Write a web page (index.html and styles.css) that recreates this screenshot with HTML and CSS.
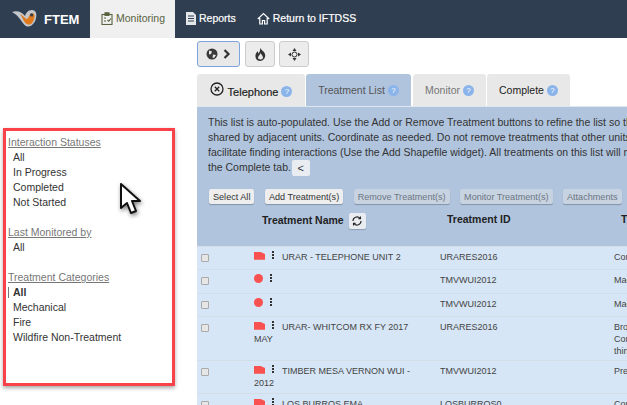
FILE: index.html
```html
<!DOCTYPE html>
<html lang="en">

<head>
    <meta charset="UTF-8">
    <meta name="viewport" content="width=device-width, initial-scale=1.0">
    <title>FTEM Monitoring</title>
    <link rel="stylesheet" href="styles.css">
</head>

<body>
    <header class="topbar">
        <div class="brand">
            <svg class="logo" width="26" height="20" viewBox="0 0 26 20">
                <path d="M0 3 C5 1 10 3 13 7 C14 4 16 1 20 1 C24 1 25 5 24 9 C23 15 18 19 14 17 C10 15 8 7 0 3Z" fill="#c4c8cc"/>
                <path d="M8 5 C11 6 13 10 15 10 C17 9 17 5 20 4 C23 4 23 8 22 10 C21 14 18 17 15 15 C12 14 11 9 8 5Z" fill="#e07a1c"/>
                <path d="M18 5 C20 4 22 5 21 7 C20 8 18 8 18 5Z" fill="#2f3e50"/>
            </svg>
            <span class="brand-name">FTEM</span>
        </div>
        <a class="nav-item nav-active">
            <svg width="12" height="13" viewBox="0 0 12 13" fill="none" stroke="#59633f" stroke-width="1.1">
                <rect x="1" y="2.5" width="10" height="10"/><rect x="4" y="0.8" width="4" height="2.6" fill="#59633f"/>
                <path d="M3 6h2M3 9h2M6.5 8l1.2 1.2L10 6.5"/>
            </svg>
            Monitoring
        </a>
        <a class="nav-item">
            <svg width="10" height="13" viewBox="0 0 10 13">
                <path d="M0 0h7l3 3v10H0z" fill="#e4e7ea"/>
                <path d="M2 4h6M2 6.5h6M2 9h6" stroke="#2f3e50"/>
            </svg>
            Reports
        </a>
        <a class="nav-item nav-return">
            <svg width="13" height="13" viewBox="0 0 13 13" fill="none" stroke="#fff" stroke-width="1.2">
                <path d="M0.8 7L6.5 1.5 12.2 7M2.8 6v6h2.6V8.5h2.2V12h2.6V6"/>
            </svg>
            Return to IFTDSS
        </a>
    </header>

    <div class="layout">
        <aside class="filters">
            <h3 class="filter-title">Interaction Statuses</h3>
            <ul class="filter-list">
                <li>All</li>
                <li>In Progress</li>
                <li>Completed</li>
                <li>Not Started</li>
            </ul>
            <h3 class="filter-title">Last Monitored by</h3>
            <ul class="filter-list">
                <li>All</li>
            </ul>
            <h3 class="filter-title">Treatment Categories</h3>
            <ul class="filter-list">
                <li class="filter-selected">All</li>
                <li>Mechanical</li>
                <li>Fire</li>
                <li>Wildfire Non-Treatment</li>
            </ul>
        </aside>

        <main class="content">
            <div class="toolbar">
                <button class="tool-btn tool-focus">
                    <svg width="12" height="12" viewBox="0 0 12 12">
                        <circle cx="6" cy="6" r="5.5" fill="#3a3a3a"/>
                        <path d="M3 2.5l3 1-1 2.5-2 .5zM7 6.5l3 .5-2 3-1.500-.5z" fill="#e8e8e8"/>
                    </svg>
                    <svg width="8" height="10" viewBox="0 0 8 10" fill="none" stroke="#333" stroke-width="2.200"><path d="M1.500 1l4 4-4 4"/></svg>
                </button>
                <button class="tool-btn">
                    <svg width="11" height="13" viewBox="0 0 11 13">
                        <path d="M5 0c1 2 4 3 5 6 1 4-2 7-5 7S0 10 .5 7c.3-2 1.500-2.500 2-4 .5.800.8 1.500.8 2.500C4.500 4.500 5.500 2 5 0z" fill="#333"/>
                        <path d="M5.500 5c.5 1.500 2.500 2.500 2.500 4.800 0 1-1 1.700-2.500 1.700S3 10.800 3 9.800C3 8.300 5 7 5.500 5z" fill="#e8e8e8"/>
                    </svg>
                </button>
                <button class="tool-btn">
                    <svg width="13" height="13" viewBox="0 0 13 13" fill="#333">
                        <path d="M6.500 0l2 3h-4zM6.500 13l-2-3h4zM0 6.500l3-2v4zM13 6.500l-3 2v-4z"/>
                        <circle cx="6.500" cy="6.500" r="2.500" fill="none" stroke="#333"/>
                    </svg>
                </button>
            </div>

            <nav class="tabs">
                <div class="tab tab-current">
                    <svg class="tab-x" width="14" height="14" viewBox="0 0 14 14" fill="none" stroke="#222" stroke-width="1.300">
                        <circle cx="7" cy="7" r="6"/><path d="M4.800 4.800l4.400 4.400M9.200 4.800l-4.400 4.400"/>
                    </svg>
                    Telephone <span class="help">?</span>
                </div>
                <div class="tab tab-list">Treatment List <span class="help">?</span></div>
                <div class="tab tab-muted">Monitor <span class="help">?</span></div>
                <div class="tab tab-last">Complete <span class="help">?</span></div>
            </nav>

            <section class="panel">
                <p class="intro">This list is auto-populated. Use the Add or Remove Treatment buttons to refine the list so th<br>
                    shared by adjacent units. Coordinate as needed. Do not remove treatments that other units<br>
                    facilitate finding interactions (Use the Add Shapefile widget). All treatments on this list will n<br>
                    the Complete tab. <button class="collapse-btn">&lt;</button></p>
                <div class="actions">
                    <button class="action-btn">Select All</button>
                    <button class="action-btn">Add Treatment(s)</button>
                    <button class="action-btn action-off">Remove Treatment(s)</button>
                    <button class="action-btn action-off">Monitor Treatment(s)</button>
                    <button class="action-btn action-off">Attachments</button>
                </div>
                <table class="treatments">
                    <thead>
                        <tr>
                            <th class="col-check"></th>
                            <th class="col-name">
                                <span class="name-head">Treatment Name
                                    <button class="refresh-btn">
                                        <svg width="10" height="10" viewBox="0 0 10 10" fill="none" stroke="#222" stroke-width="1.100">
                                            <path d="M1 5a4 4 0 0 1 7-2.700M9 5a4 4 0 0 1-7 2.700M8.500.5v2.200H6.300M1.500 9.500V7.300h2.200"/>
                                        </svg>
                                    </button>
                                </span>
                            </th>
                            <th class="col-id">Treatment ID</th>
                            <th class="col-type">Type</th>
                        </tr>
                    </thead>
                    <tbody>
                        <tr class="row-a">
                            <td><span class="check"></span></td>
                            <td class="name-cell"><span class="flag"></span><span class="dots"></span>URAR - TELEPHONE UNIT 2</td>
                            <td>URARES2016</td>
                            <td>Commercial</td>
                        </tr>
                        <tr class="row-a row-tall">
                            <td><span class="check"></span></td>
                            <td class="name-cell"><span class="dot"></span><span class="dots"></span></td>
                            <td>TMVWUI2012</td>
                            <td>Machine</td>
                        </tr>
                        <tr class="row-a">
                            <td><span class="check"></span></td>
                            <td class="name-cell"><span class="dot"></span><span class="dots"></span></td>
                            <td>TMVWUI2012</td>
                            <td>Machine</td>
                        </tr>
                        <tr class="row-b">
                            <td><span class="check"></span></td>
                            <td class="name-cell"><span class="flag"></span><span class="dots"></span>URAR- WHITCOM RX FY 2017 MAY</td>
                            <td>URARES2016</td>
                            <td>Broadcast<br>Commercial<br>thinning</td>
                        </tr>
                        <tr class="row-c">
                            <td><span class="check"></span></td>
                            <td class="name-cell"><span class="flag"></span><span class="dots"></span>TIMBER MESA VERNON WUI - 2012</td>
                            <td>TMVWUI2012</td>
                            <td>Prescribed</td>
                        </tr>
                        <tr class="row-a">
                            <td><span class="check"></span></td>
                            <td class="name-cell"><span class="flag"></span><span class="dots"></span>LOS BURROS EMA</td>
                            <td>LOSBURROS0</td>
                            <td>Commercial</td>
                        </tr>
                    </tbody>
                </table>
            </section>
        </main>
    </div>

    <!-- annotation drawn over the screenshot -->
    <div class="callout"></div>
    <svg class="pointer" width="24" height="34" viewBox="0 0 24 34">
        <path d="M2 2v24l6-5 4 10 5-2-4-10h8z" fill="#fff" stroke="#111" stroke-width="2" stroke-linejoin="round"/>
    </svg>
</body>

</html>
```

FILE: styles.css
```css
* {
    box-sizing: border-box;
}

html,
body {
    height: 100%;
}

body {
    margin: 0;
    overflow: hidden;
    background-color: #fff;
    color: #333;
    font-family: "Liberation Sans", Arial, sans-serif;
    font-size: 10.5px;
}

button {
    font-family: inherit;
}

/* top bar */
.topbar {
    display: flex;
    height: 38px;
    background-color: #2f3e50;
    color: #fff;
}

.brand {
    display: flex;
    align-items: center;
    gap: 6px;
    width: 90px;
    padding-left: 12px;
}

.brand-name {
    font-size: 13px;
    font-weight: bold;
}

.nav-item {
    display: flex;
    align-items: center;
    gap: 3px;
    padding: 0 8px 2px 6px;
    margin-right: 5px;
    font-size: 10.5px;
    -webkit-text-stroke: 0.2px #fff;
}

.nav-active {
    width: 85px;
    margin-right: 5px;
    padding-left: 11px;
    background-color: #f0f0f0;
    color: #59633f;
    -webkit-text-stroke: 0;
}

.nav-return {
    margin-left: 2px;
}

/* page */
.layout {
    display: flex;
    height: 367px;
}

.filters {
    flex: 0 0 197px;
    padding: 97px 0 0 8px;
}

.filter-title {
    margin: 0;
    font-size: 10.500px;
    line-height: 15px;
    font-weight: normal;
    color: #777;
    text-decoration: underline;
}

.filter-list {
    list-style: none;
    margin: 0 0 15px;
    padding: 0 0 0 5px;
    line-height: 15px;
    font-size: 10.500px;
}

.filter-selected {
    position: relative;
    font-weight: bold;
}

.filter-selected::before {
    content: "";
    position: absolute;
    left: -5px;
    top: 2px;
    width: 1px;
    height: 11px;
    background-color: #777;
}

.content {
    flex: 1;
    min-width: 0;
    overflow: hidden;
}

.toolbar {
    display: flex;
    gap: 4px;
    height: 36px;
    padding-top: 3px;
}

.tool-btn {
    display: flex;
    align-items: center;
    justify-content: center;
    gap: 5px;
    width: 30px;
    height: 26px;
    padding: 0;
    background-color: #ececec;
    border: 1px solid #ccc;
    border-radius: 3px;
}

.tool-focus {
    width: 43px;
    margin-right: 1px;
    border-color: #7fa4dc;
    background-color: #e8e8e8;
}

.tabs {
    display: flex;
    gap: 1px;
    height: 33px;
    border-bottom: 1px solid #dfe6ee;
}

.tab {
    display: flex;
    align-items: center;
    justify-content: center;
    gap: 3px;
    background-color: #e8e8e8;
    border-radius: 3px 3px 0 0;
    color: #222;
    font-size: 10.5px;
}

.tab-current {
    width: 108px;
    font-size: 11px;
    -webkit-text-stroke: 0.2px #222;
    padding-top: 3px;
}

.tab-x {
    margin: -5px 1px 0 0;
}

.tab-list {
    width: 105px;
    margin-right: 1px;
    background-color: #b0c4de;
    color: #555;
}

.tab-muted {
    width: 73px;
    color: #777;
}

.tab-last {
    width: 83px;
}

.help {
    display: inline-block;
    width: 11px;
    height: 11px;
    border-radius: 50%;
    background-color: #8ab4ea;
    color: #fff;
    font-size: 8px;
    line-height: 11px;
    text-align: center;
    -webkit-text-stroke: 0;
}

.panel {
    width: 520px;
    height: 298px;
    background-color: #b0c4de;
}

.intro {
    margin: 0;
    padding: 8px 0 0 11px;
    font-size: 10.500px;
    line-height: 15px;
    white-space: nowrap;
    color: #333;
}

.collapse-btn {
    width: 18px;
    height: 16px;
    margin-left: -2px;
    padding: 0;
    border: none;
    border-radius: 2px;
    background-color: #e9edf2;
    color: #333;
    font-size: 11px;
    vertical-align: middle;
}

.actions {
    display: flex;
    gap: 10.5px;
    padding: 13px 0 0 12px;
}

.action-btn {
    height: 15px;
    padding: 0 4px;
    border: none;
    border-radius: 2px;
    background-color: #eeeeee;
    color: #333;
    font-size: 9.1px;
    box-shadow: 0 1px 1px rgba(0, 0, 0, 0.25);
}

.action-off {
    background-color: #c8d3e2;
    color: #6b7683;
}

.treatments {
    width: 520px;
    table-layout: fixed;
    border-collapse: collapse;
}

.treatments th {
    height: 42px;
    padding: 9px 0 0;
    vertical-align: top;
    text-align: left;
    color: #222;
    font-size: 10.5px;
}

.col-check {
    width: 57px;
}

.col-name {
    width: 186px;
}

.col-id {
    width: 174px;
}

.treatments .col-id,
.treatments .col-type {
    padding-left: 7px;
}

.treatments .col-name {
    padding-top: 10px;
}

.name-head {
    display: inline-flex;
    align-items: flex-start;
    gap: 5px;
    margin-left: 8px;
}

.refresh-btn {
    display: flex;
    align-items: center;
    justify-content: center;
    width: 17px;
    height: 16px;
    margin-top: -1px;
    padding: 0;
    border: none;
    border-radius: 2px;
    background-color: #e9edf2;
    box-shadow: 0 1px 1px rgba(0, 0, 0, 0.2);
}

.treatments td {
    padding: 4px 0 0;
    vertical-align: top;
    background-color: #d6e6f6;
    border-top: 1px solid #d3dde8;
    color: #444;
    font-size: 9px;
    line-height: 12px;
}

.treatments td:first-child {
    padding-left: 4px;
}

.treatments .name-cell {
    padding-right: 24px;
}

.row-a {
    height: 23px;
}

.row-tall {
    height: 24px;
}

.row-b {
    height: 44px;
}

.row-c {
    height: 33px;
}

.check {
    display: inline-block;
    width: 8px;
    height: 8px;
    margin-top: 3px;
    background-color: #e6e6e6;
    border: 1px solid #aaa;
    border-radius: 1px;
}

.flag {
    display: inline-block;
    width: 11px;
    height: 8px;
    margin-right: 7px;
    background-color: #f95050;
    clip-path: polygon(0 0, 55% 0, 100% 30%, 100% 100%, 0 100%);
}

.dot {
    display: inline-block;
    width: 9px;
    height: 9px;
    margin-right: 7px;
    border-radius: 50%;
    background-color: #f95050;
}

.dots {
    display: inline-block;
    width: 2px;
    height: 2px;
    margin: 0 8px 4px 0;
    background-color: #333;
    box-shadow: 0 -3px 0 #333, 0 3px 0 #333;
}

/* red box and mouse pointer on top of the screenshot */
.callout {
    position: absolute;
    left: 3px;
    top: 128px;
    width: 172px;
    height: 258px;
    border: 3px solid #f9424a;
    box-shadow: 0 2px 4px rgba(0, 0, 0, 0.35);
}

.pointer {
    position: absolute;
    left: 119px;
    top: 182px;
    filter: drop-shadow(1px 2px 2px rgba(0, 0, 0, 0.5));
}
```
